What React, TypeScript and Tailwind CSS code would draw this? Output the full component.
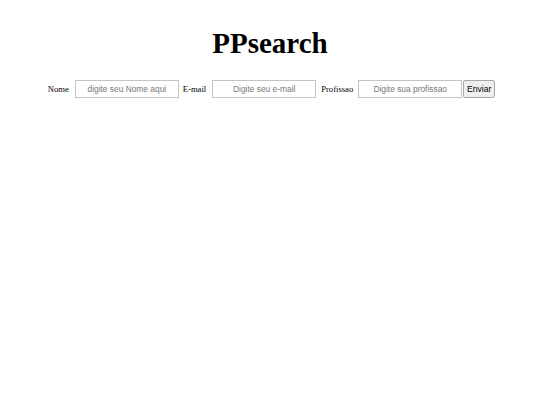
export default function App() {
  const label = "text-[8.6px] text-black [font-family:'Liberation_Serif',serif]"
  const input =
    "h-[18px] w-[104px] border border-[#c4c4c4] bg-white px-1 text-center text-[8.4px] text-[#444] placeholder:text-[#777] outline-none [font-family:'Liberation_Sans',Arial,sans-serif]"

  return (
    <div className="min-h-[405px] w-full bg-white">
      <h1 className="pt-[27px] text-center text-[29px] font-bold leading-[33px] text-black [font-family:'Liberation_Serif',serif]">
        PPsearch
      </h1>
      <form
        className="mt-[20px] flex items-center justify-center pl-[3px]"
        onSubmit={e => e.preventDefault()}
      >
        <label className={label}>Nome</label>
        <input className={`${input} ml-[6px]`} placeholder="digite seu Nome aqui" />
        <label className={`${label} ml-[4px]`}>E-mail</label>
        <input className={`${input} ml-[6px] w-[103px]`} placeholder="Digite seu e-mail" />
        <label className={`${label} ml-[5px]`}>Profissao</label>
        <input className={`${input} ml-[5px]`} placeholder="Digite sua profissao" />
        <button
          type="submit"
          className="ml-[1px] h-[18px] w-[32px] rounded-[2px] border border-[#a8a8a8] bg-[#efefef] text-[8.6px] text-black [font-family:'Liberation_Sans',Arial,sans-serif]"
        >
          Enviar
        </button>
      </form>
    </div>
  )
}
